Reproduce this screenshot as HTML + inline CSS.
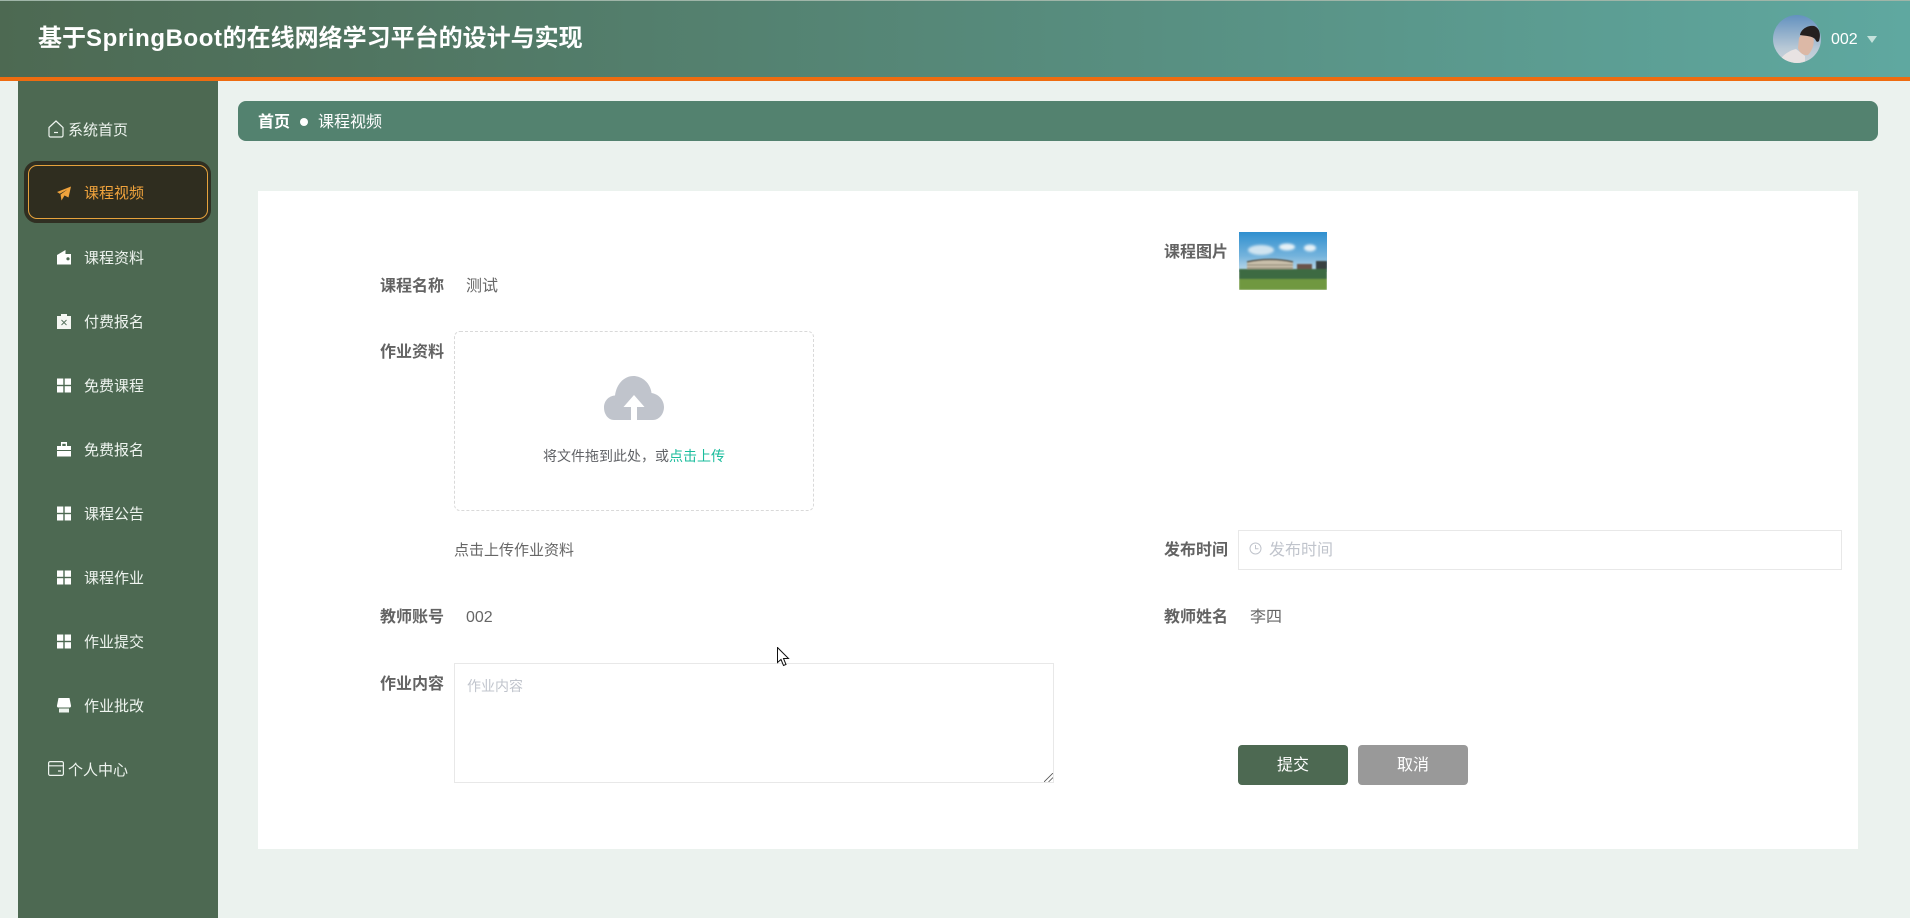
<!DOCTYPE html>
<html lang="zh">
<head>
<meta charset="utf-8">
<title>课程视频</title>
<style>
html,body{margin:0;padding:0;width:1910px;height:918px;overflow:hidden;background:#ebf2ee;}
body{position:relative;font-family:"Liberation Sans","Noto Sans CJK SC",sans-serif;}
.a{position:absolute;}
.t{position:absolute;white-space:nowrap;line-height:1;}
.m{font-size:15px;color:#eef4ef;left:84px;}
.i{position:absolute;left:57px;width:14px;height:15px;overflow:visible;}
.l{font-size:16px;font-weight:bold;color:#636363;}
.v{font-size:16px;color:#666;}
</style>
</head>
<body>
<div class="a" style="left:0;top:0;width:1910px;height:77px;background:linear-gradient(90deg,#4d6952 0%,#5fa8a0 100%);border-top:1px solid #9fb5a8;box-sizing:border-box;"></div>
<div class="a" style="left:0;top:77px;width:1910px;height:4px;background:#ee6c10;"></div>
<div class="t" style="left:38px;top:27px;font-size:24px;font-weight:bold;color:#fff;">基于<span style="letter-spacing:.6px;">SpringBoot</span>的在线网络学习平台的设计与实现</div>

<svg class="a" style="left:1773px;top:15px;" width="48" height="48" viewBox="0 0 48 48">
<defs><clipPath id="av"><circle cx="24" cy="24" r="24"/></clipPath><linearGradient id="ag" x1="0" y1="0" x2="0" y2="1"><stop offset="0" stop-color="#6391bf"/><stop offset=".7" stop-color="#b9c9d6"/><stop offset="1" stop-color="#cbd3da"/></linearGradient></defs>
<g clip-path="url(#av)">
<rect width="48" height="48" fill="url(#ag)"/>
<path d="M6 48C8 41 15 36 23 34L32 41V48Z" fill="#e8e2e2"/>
<path d="M26 23C28 18 34 18 40 21C42 27 40 35 35 40C30 41 26 37 25 33Z" fill="#dcb8a6"/>
<path d="M27 20C28 14 35 10 41 11C47 13 48 20 46 26C44 28 43 26 42 24C39 21 33 21 27 20Z" fill="#25201f"/>
</g>
</svg>
<div class="t" style="left:1831px;top:32px;font-size:16px;color:#fff;">002</div>
<div class="a" style="left:1867px;top:36px;width:0;height:0;border-left:5px solid transparent;border-right:5px solid transparent;border-top:7px solid #c5e2dc;"></div>

<div class="a" style="left:18px;top:81px;width:200px;height:837px;background:#4d6952;"></div>

<svg class="a" style="left:48px;top:120px;" width="16" height="18" viewBox="0 0 16 18" fill="none" stroke="#eef4ef" stroke-width="1.2"><path d="M1 7.500L8 1l7 6.500V15.500a1.500 1.500 0 0 1-1.500 1.500h-11A1.500 1.500 0 0 1 1 15.500z"/><path d="M6 12.500h4"/></svg>
<div class="t m" style="left:68px;top:123px;">系统首页</div>

<div class="a" style="left:24px;top:161px;width:187px;height:62px;box-sizing:border-box;background:#2f2d1f;border:4px solid #302f22;border-radius:13px;"></div>
<div class="a" style="left:28px;top:165px;width:180px;height:54px;box-sizing:border-box;border:1px solid #e6a23c;border-radius:9px;"></div>
<svg class="i" style="top:186px;" viewBox="0 0 14 15"><path d="M0 6L14 0.500L11.500 11.500L7.500 9.500L4.500 14.500L3.500 8.500L10.500 3.500L2.800 7.800Z" fill="#f0a33c"/></svg>
<div class="t m" style="top:186px;color:#f0a33c;">课程视频</div>

<svg class="i" style="top:250px;" viewBox="0 0 14 15"><path d="M0 5L8.500 0V4H14V14.500H0z" fill="#fff"/><circle cx="11" cy="8.800" r="1.600" fill="#4d6952"/></svg>
<div class="t m" style="top:251px;">课程资料</div>

<svg class="i" style="top:314px;" viewBox="0 0 14 15"><path d="M0 2h4V0h6v2h4v13H0z" fill="#f4f6f2"/><path d="M4.500 6l5 5M9.500 6l-5 5" stroke="#56705c" stroke-width=".9"/></svg>
<div class="t m" style="top:315px;">付费报名</div>

<svg class="i" style="top:378px;" viewBox="0 0 14 14" fill="#fff"><rect width="6.300" height="6.300"/><rect x="7.700" width="6.300" height="6.300"/><rect y="7.700" width="6.300" height="6.300"/><rect x="7.700" y="7.700" width="6.300" height="6.300"/></svg>
<div class="t m" style="top:379px;">免费课程</div>

<svg class="i" style="top:442px;" viewBox="0 0 14 15"><path d="M0 4h4V0h6v4h4V14.500H0z" fill="#fff"/><path d="M5.300 1.800h3.400V4H5.300z" fill="#4d6952"/><path d="M0 8.500h14" stroke="#4d6952"/></svg>
<div class="t m" style="top:443px;">免费报名</div>

<svg class="i" style="top:506px;" viewBox="0 0 14 14" fill="#fff"><rect width="6.300" height="6.300"/><rect x="7.700" width="6.300" height="6.300"/><rect y="7.700" width="6.300" height="6.300"/><rect x="7.700" y="7.700" width="6.300" height="6.300"/></svg>
<div class="t m" style="top:507px;">课程公告</div>

<svg class="i" style="top:570px;" viewBox="0 0 14 14" fill="#fff"><rect width="6.300" height="6.300"/><rect x="7.700" width="6.300" height="6.300"/><rect y="7.700" width="6.300" height="6.300"/><rect x="7.700" y="7.700" width="6.300" height="6.300"/></svg>
<div class="t m" style="top:571px;">课程作业</div>

<svg class="i" style="top:634px;" viewBox="0 0 14 14" fill="#fff"><rect width="6.300" height="6.300"/><rect x="7.700" width="6.300" height="6.300"/><rect y="7.700" width="6.300" height="6.300"/><rect x="7.700" y="7.700" width="6.300" height="6.300"/></svg>
<div class="t m" style="top:635px;">作业提交</div>

<svg class="i" style="top:698px;" viewBox="0 0 14 15"><path d="M1.500 0h11L14 7.500a1.500 1.500 0 0 1-1.500 2h-11A1.500 1.500 0 0 1 0 7.500z" fill="#fff"/><path d="M2 10.500h10v4H2z" fill="#eef4ef"/></svg>
<div class="t m" style="top:699px;">作业批改</div>

<svg class="a" style="left:48px;top:761px;" width="16" height="15" viewBox="0 0 16 15" fill="none" stroke="#eef4ef" stroke-width="1.200"><rect x=".6" y=".6" width="14.800" height="13.800" rx="1.500"/><path d="M.6 4.800h14.800M10 10h3"/></svg>
<div class="t m" style="left:68px;top:763px;">个人中心</div>

<div class="a" style="left:238px;top:101px;width:1640px;height:40px;background:#53826f;border-radius:8px;"></div>
<div class="t" style="left:258px;top:115px;font-size:16px;font-weight:bold;color:#fff;">首页</div>
<div class="a" style="left:300px;top:118px;width:8px;height:8px;border-radius:50%;background:#fff;"></div>
<div class="t" style="left:318px;top:115px;font-size:16px;color:#fff;">课程视频</div>

<div class="a" style="left:258px;top:191px;width:1600px;height:658px;background:#fff;"></div>

<div class="t l" style="left:380px;top:279px;">课程名称</div>
<div class="t v" style="left:466px;top:279px;">测试</div>

<div class="t l" style="left:1164px;top:245px;">课程图片</div>
<svg class="a" style="left:1239px;top:232px;" width="88" height="58" viewBox="0 0 88 58">
<defs>
<linearGradient id="sky" x1="0" y1="0" x2="0" y2="1"><stop offset="0" stop-color="#2f8fcf"/><stop offset=".6" stop-color="#74b3dc"/><stop offset="1" stop-color="#c2dcea"/></linearGradient>
<filter id="b" x="-20%" y="-20%" width="140%" height="140%"><feGaussianBlur stdDeviation=".7"/></filter>
<filter id="c" x="-30%" y="-50%" width="160%" height="200%"><feGaussianBlur stdDeviation="1.300"/></filter>
</defs>
<rect width="88" height="40" fill="url(#sky)"/>
<g filter="url(#c)">
<ellipse cx="22" cy="18" rx="13" ry="5" fill="#d0e4f0"/><ellipse cx="48" cy="15" rx="8" ry="3.500" fill="#e6f1f7"/><ellipse cx="71" cy="16" rx="6" ry="3.500" fill="#e6f1f7"/>
</g>
<g filter="url(#b)">
<path d="M8 30Q31 25 54 30V39H8z" fill="#c9bfaa"/>
<path d="M8 33H54M8 36H54" stroke="#8b8470" stroke-width="1"/>
<path d="M8 30Q31 25 54 30" stroke="#4c4a40" stroke-width="1.500" fill="none"/>
<path d="M58 32h15v8H58z" fill="#6a5348"/><path d="M77 29h11v11H77z" fill="#39403f"/>
<rect y="37" width="88" height="11" fill="#3c6a42"/>
<rect y="47" width="88" height="11" fill="#6f983f"/>
</g>
</svg>

<div class="t l" style="left:380px;top:345px;">作业资料</div>
<div class="a" style="left:454px;top:331px;width:360px;height:180px;box-sizing:border-box;border:1px dashed #d9d9d9;border-radius:6px;"></div>
<svg class="a" style="left:604px;top:376px;" width="60" height="44" viewBox="0 0 60 44"><path d="M10 44C4 44 0 38 0 31.500C0 25 4.500 20 11 19.500C12.500 8 20 0 29.500 0C39 0 46.500 8 47.500 17C54.500 18 60 24 60 31C60 38 55 44 49 44Z" fill="#c0c4cc"/><path d="M30 19L19.500 31H27V44H33V31H40.500Z" fill="#fff"/></svg>
<div class="t" style="left:543px;top:449px;font-size:14px;color:#606266;">将文件拖到此处，或<span style="color:#1abc9c;">点击上传</span></div>
<div class="t" style="left:454px;top:543px;font-size:15px;color:#666;">点击上传作业资料</div>

<div class="t l" style="left:1164px;top:543px;">发布时间</div>
<div class="a" style="left:1238px;top:530px;width:604px;height:40px;box-sizing:border-box;border:1px solid #e8e8e8;"></div>
<svg class="a" style="left:1249px;top:542px;" width="13" height="13" viewBox="0 0 13 13" fill="none" stroke="#c0c4cc" stroke-width="1"><circle cx="6.500" cy="6.500" r="5.500"/><path d="M6.500 3v3.800h3"/></svg>
<div class="t" style="left:1269px;top:543px;font-size:16px;color:#c0c4cc;">发布时间</div>

<div class="t l" style="left:380px;top:610px;">教师账号</div>
<div class="t v" style="left:466px;top:610px;">002</div>
<div class="t l" style="left:1164px;top:610px;">教师姓名</div>
<div class="t v" style="left:1250px;top:610px;">李四</div>

<div class="t l" style="left:380px;top:677px;">作业内容</div>
<div class="a" style="left:454px;top:663px;width:600px;height:120px;box-sizing:border-box;border:1px solid #e8e8e8;"></div>
<div class="t" style="left:467px;top:679px;font-size:14px;color:#c0c4cc;">作业内容</div>
<svg class="a" style="left:1044px;top:773px;" width="9" height="9" viewBox="0 0 9 9" stroke="#555" stroke-width=".8"><path d="M0 9L9 0M4.500 9L9 4.500"/></svg>

<div class="a" style="left:1238px;top:745px;width:110px;height:40px;background:#4d6952;border-radius:4px;"></div>
<div class="t" style="left:1277px;top:758px;font-size:16px;color:#fff;">提交</div>
<div class="a" style="left:1358px;top:745px;width:110px;height:40px;background:#999;border-radius:4px;"></div>
<div class="t" style="left:1397px;top:758px;font-size:16px;color:#fff;">取消</div>

<svg class="a" style="left:777px;top:647px;" width="13" height="20" viewBox="0 0 13 20"><path d="M.5.500V15.500L4 12.500L6.500 18.500L9 17.500L6.500 11.500H11.500Z" fill="#fff" stroke="#111" stroke-width="1"/></svg>
</body>
</html>
